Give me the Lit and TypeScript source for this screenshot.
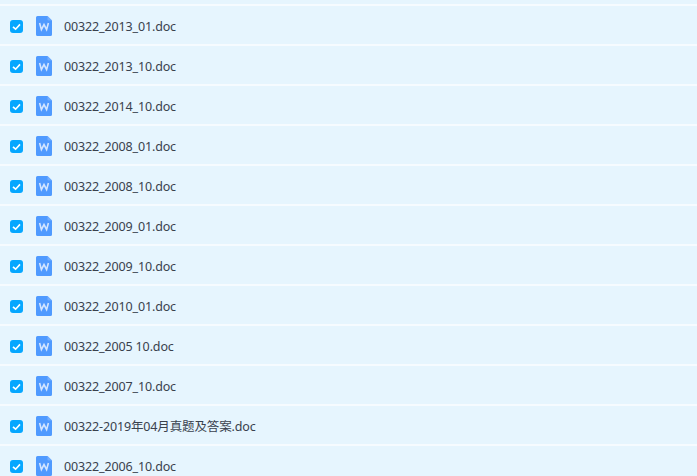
import { LitElement, html, css } from "lit";
import { customElement } from "lit/decorators.js";

const FILES = [
  "00322_2013_01.doc",
  "00322_2013_10.doc",
  "00322_2014_10.doc",
  "00322_2008_01.doc",
  "00322_2008_10.doc",
  "00322_2009_01.doc",
  "00322_2009_10.doc",
  "00322_2010_01.doc",
  "00322_2005 10.doc",
  "00322_2007_10.doc",
  "00322-2019年04月真题及答案.doc",
  "00322_2006_10.doc",
];

@customElement("app-root")
export class AppRoot extends LitElement {
  static styles = css`
    :host {
      display: block;
      width: 697px;
      height: 476px;
      overflow: hidden;
      background: #e6f5fe;
      font-family: "Noto Sans", "Noto Sans CJK SC", sans-serif;
    }
    .list {
      display: flex;
      flex-direction: column;
      padding-top: 4px;
    }
    .row {
      flex: none;
      height: 40px;
      box-sizing: border-box;
      border-top: 2px solid #f6fbff;
      display: flex;
      align-items: center;
      padding: 2px 0 0 10px;
    }
    .check {
      flex: none;
      width: 13px;
      height: 13px;
      margin-top: 1px;
      display: block;
    }
    .icon {
      flex: none;
      width: 16px;
      height: 20px;
      margin-left: 13px;
      display: block;
    }
    .name {
      margin: 2px 0 0 12px;
      font-size: 12.5px;
      letter-spacing: -0.14px;
      line-height: 20px;
      color: #39414d;
      white-space: nowrap;
    }
  `;

  render() {
    return html`<div class="list">
      ${FILES.map(
        (f) => html`<div class="row">
          <svg class="check" viewBox="0 0 13 13">
            <rect width="13" height="13" rx="3" fill="#06a7ff"></rect>
            <path d="M3 6.8 L5.6 9.2 L10 4.4" fill="none" stroke="#fff" stroke-width="1.6"></path>
          </svg>
          <svg class="icon" viewBox="0 0 16 20">
            <path d="M1.5 0 H11.5 L16 4.5 V18.5 A1.5 1.5 0 0 1 14.5 20 H1.5 A1.5 1.5 0 0 1 0 18.5 V1.5 A1.5 1.5 0 0 1 1.5 0 Z" fill="#4f9aff"></path>
            <path d="M11.5 0 L16 4.5 H12.5 A1 1 0 0 1 11.5 3.5 Z" fill="#72adff"></path>
            <path d="M3.6 7 L5.4 13.6 L8 8.6 L10.6 13.6 L12.4 7" fill="none" stroke="#d3e5ff" stroke-width="1.6"></path>
          </svg>
          <span class="name">${f}</span>
        </div>`
      )}
    </div>`;
  }
}
